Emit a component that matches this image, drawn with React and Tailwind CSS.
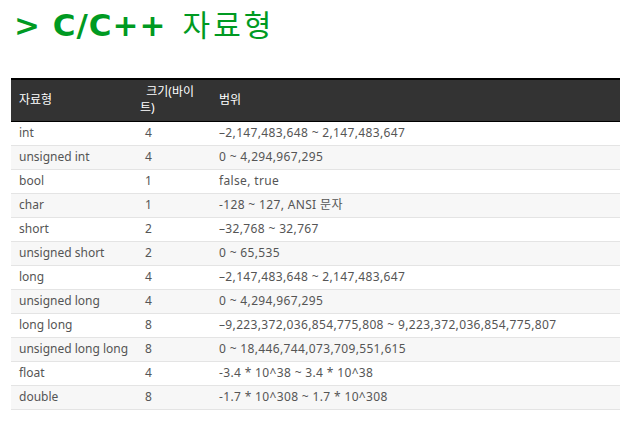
import React from 'react';

const rows = [
  ['int', '4', '–2,147,483,648 ~ 2,147,483,647'],
  ['unsigned int', '4', '0 ~ 4,294,967,295'],
  ['bool', '1', 'false, true'],
  ['char', '1', '-128 ~ 127, ANSI 문자'],
  ['short', '2', '–32,768 ~ 32,767'],
  ['unsigned short', '2', '0 ~ 65,535'],
  ['long', '4', '–2,147,483,648 ~ 2,147,483,647'],
  ['unsigned long', '4', '0 ~ 4,294,967,295'],
  ['long long', '8', '–9,223,372,036,854,775,808 ~ 9,223,372,036,854,775,807'],
  ['unsigned long long', '8', '0 ~ 18,446,744,073,709,551,615'],
  ['float', '4', '-3.4 * 10^38 ~ 3.4 * 10^38'],
  ['double', '8', '-1.7 * 10^308 ~ 1.7 * 10^308'],
];

export default function App() {
  return (
    <div className="w-[637px] h-[434px] bg-white font-['Noto_Sans','Noto_Sans_CJK_KR',sans-serif]">
      <h1 className="flex items-baseline pl-[14px] pt-[1px] h-[78px] text-[30px] leading-[44px] text-[#009a22] font-['DejaVu_Sans','Noto_Sans_CJK_KR',sans-serif]">
        <span className="text-[31px] font-bold tracking-[1px]">&gt; C/C++</span>
        <span className="ml-[16px] font-normal tracking-[3px] font-['Noto_Sans_CJK_KR',sans-serif]">자료형</span>
      </h1>

      <table className="ml-[11px] w-[609px] table-fixed border-collapse text-[12px] leading-[16px]">
        <colgroup>
          <col className="w-[121px]" />
          <col className="w-[79px]" />
          <col />
        </colgroup>
        <thead>
          <tr className="bg-[#333333] text-white border-t-2 border-b border-black h-[42px]">
            <th className="px-2 text-left font-normal">자료형</th>
            <th className="px-2 text-left font-normal">&nbsp;&nbsp;크기(바이트)</th>
            <th className="px-2 text-left font-normal">범위</th>
          </tr>
        </thead>
        <tbody className="text-[#555555]">
          {rows.map((r, i) => (
            <tr
              key={r[0]}
              className={`h-[24px] border-b border-[#e4e4e4] ${i % 2 ? 'bg-[#f7f7f7]' : 'bg-white'}`}
            >
              <td className="px-2 whitespace-nowrap">{r[0]}</td>
              <td className="px-2 pl-[13px]">{r[1]}</td>
              <td className="px-2 whitespace-nowrap tracking-[0.35px]">{r[2]}</td>
            </tr>
          ))}
        </tbody>
      </table>
    </div>
  );
}
